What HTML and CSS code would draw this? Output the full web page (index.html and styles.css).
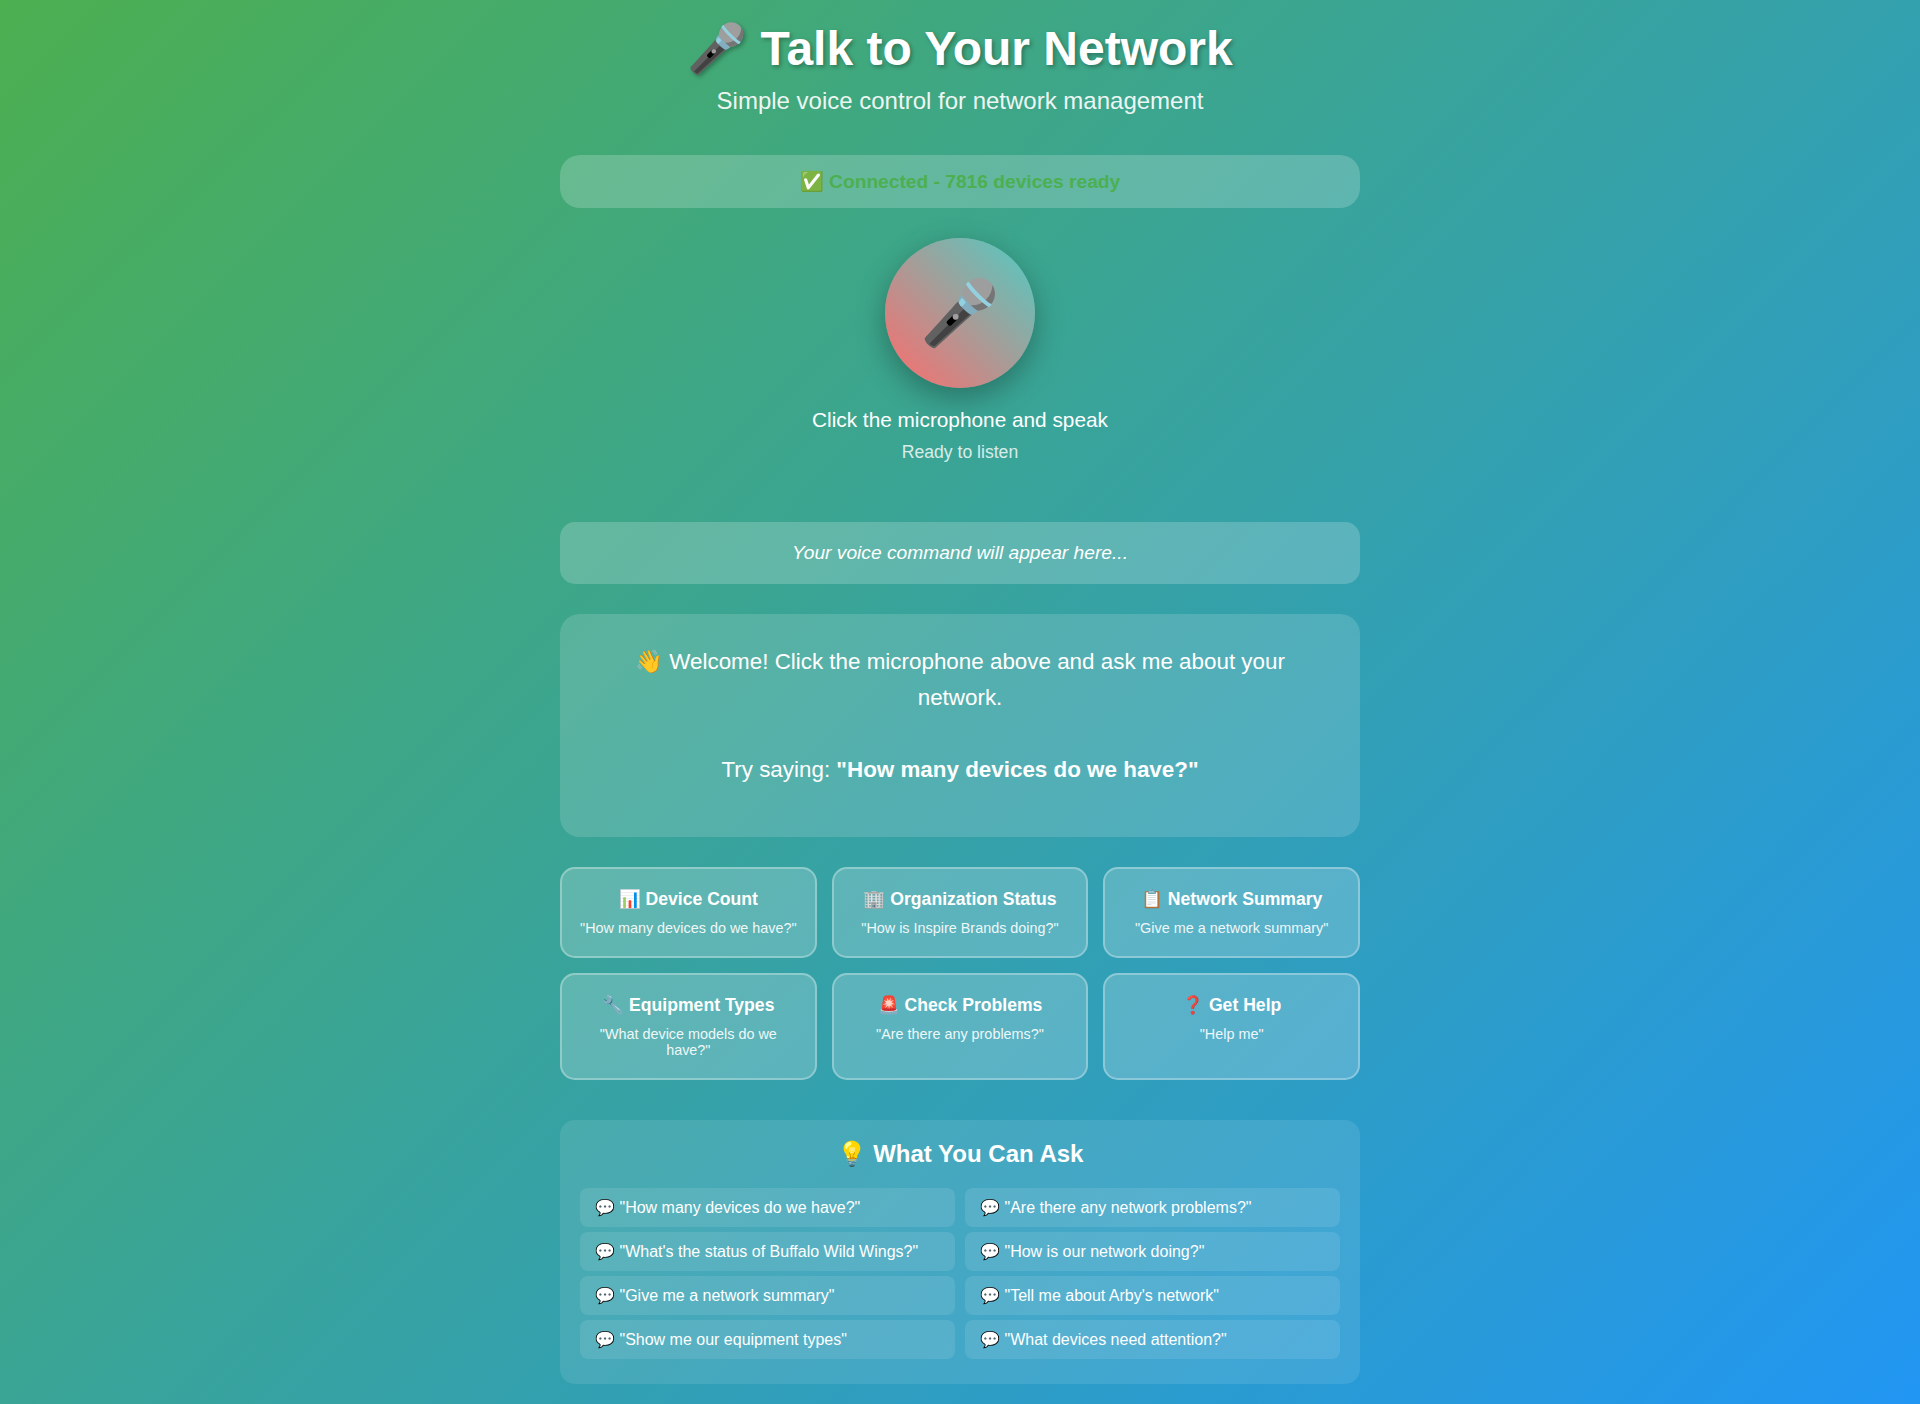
FILE: index.html
```html
<!DOCTYPE html>
<html lang="en">
  <head>
    <meta charset="UTF-8" />
    <meta name="viewport" content="width=device-width, initial-scale=1.0" />
    <title>Talk to Your Network</title>
    <link rel="stylesheet" href="styles.css">
  </head>
  <body>
    <div class="container">
      <div class="header">
        <h1>🎤 Talk to Your Network</h1>
        <p>Simple voice control for network management</p>
      </div>

      <div class="status">✅ Connected - 7816 devices ready</div>

      <div class="voice-section">
        <button class="mic-button">🎤</button>
        <div class="voice-label">Click the microphone and speak</div>
        <div class="voice-state">Ready to listen</div>
      </div>

      <div class="command">Your voice command will appear here...</div>

      <div class="response">
        👋 Welcome! Click the microphone above and ask me about your network.<br /><br />
        Try saying: <strong>"How many devices do we have?"</strong>
      </div>

      <div class="quick-actions">
        <div class="action">
          <div class="action-title">📊 Device Count</div>
          <div class="action-text">"How many devices do we have?"</div>
        </div>
        <div class="action">
          <div class="action-title">🏢 Organization Status</div>
          <div class="action-text">"How is Inspire Brands doing?"</div>
        </div>
        <div class="action">
          <div class="action-title">📋 Network Summary</div>
          <div class="action-text">"Give me a network summary"</div>
        </div>
        <div class="action">
          <div class="action-title">🔧 Equipment Types</div>
          <div class="action-text">"What device models do we have?"</div>
        </div>
        <div class="action">
          <div class="action-title">🚨 Check Problems</div>
          <div class="action-text">"Are there any problems?"</div>
        </div>
        <div class="action">
          <div class="action-title">❓ Get Help</div>
          <div class="action-text">"Help me"</div>
        </div>
      </div>

      <div class="examples">
        <h3>💡 What You Can Ask</h3>
        <div class="example-grid">
          <div class="example">💬 "How many devices do we have?"</div>
          <div class="example">💬 "Are there any network problems?"</div>
          <div class="example">💬 "What's the status of Buffalo Wild Wings?"</div>
          <div class="example">💬 "How is our network doing?"</div>
          <div class="example">💬 "Give me a network summary"</div>
          <div class="example">💬 "Tell me about Arby's network"</div>
          <div class="example">💬 "Show me our equipment types"</div>
          <div class="example">💬 "What devices need attention?"</div>
        </div>
      </div>
    </div>
  </body>
</html>
```

FILE: styles.css
```css
* {
  margin: 0;
  padding: 0;
  box-sizing: border-box;
}
body {
  font-family: "Liberation Sans", Arial, sans-serif;
  background: linear-gradient(135deg, #4caf50, #2196f3);
  color: white;
  min-height: 100vh;
  padding: 20px;
}
.container {
  max-width: 800px;
  margin: 0 auto;
}
.header {
  text-align: center;
  margin-bottom: 40px;
}
.header h1 {
  font-size: 3em;
  margin-bottom: 10px;
  text-shadow: 2px 2px 4px rgba(0, 0, 0, 0.3);
}
.header p {
  font-size: 1.5em;
  opacity: 0.9;
}
.status {
  background: rgba(255, 255, 255, 0.2);
  border-radius: 20px;
  padding: 15px;
  margin-bottom: 30px;
  text-align: center;
  font-size: 1.2em;
  font-weight: bold;
  color: #4caf50;
}
.voice-section {
  text-align: center;
  margin-bottom: 59px;
}
.mic-button {
  display: block;
  width: 150px;
  height: 150px;
  margin: 0 auto 20px;
  border: none;
  border-radius: 50%;
  background: linear-gradient(45deg, #ff6b6b, #4ecdc4);
  box-shadow: 0 10px 30px rgba(0, 0, 0, 0.3);
  color: white;
  font-size: 4em;
  cursor: pointer;
}
.voice-label {
  font-size: 1.3em;
  margin-bottom: 10px;
}
.voice-state {
  font-size: 1.1em;
  opacity: 0.8;
}
.command {
  background: rgba(255, 255, 255, 0.2);
  border-radius: 15px;
  padding: 20px;
  margin-bottom: 30px;
  text-align: center;
  font-size: 1.2em;
  font-style: italic;
}
.response {
  background: rgba(255, 255, 255, 0.15);
  border-radius: 20px;
  padding: 30px 30px 50px;
  margin-bottom: 30px;
  text-align: center;
  font-size: 1.4em;
  line-height: 1.6;
}
.quick-actions {
  display: grid;
  grid-template-columns: repeat(3, 1fr);
  gap: 15px;
  margin-bottom: 40px;
}
.action {
  background: rgba(255, 255, 255, 0.2);
  border: 2px solid rgba(255, 255, 255, 0.3);
  border-radius: 15px;
  padding: 20px 15px;
  text-align: center;
  cursor: pointer;
}
.action-title {
  font-size: 1.1em;
  font-weight: bold;
  margin-bottom: 10px;
}
.action-text {
  font-size: 0.9em;
  opacity: 0.9;
}
.examples {
  background: rgba(255, 255, 255, 0.1);
  border-radius: 15px;
  padding: 20px 20px 25px;
}
.examples h3 {
  font-size: 1.5em;
  text-align: center;
  margin-bottom: 20px;
}
.example-grid {
  display: grid;
  grid-template-columns: 1fr 1fr;
  gap: 5px 10px;
}
.example {
  background: rgba(255, 255, 255, 0.1);
  border-radius: 8px;
  padding: 10px 15px;
}
```
